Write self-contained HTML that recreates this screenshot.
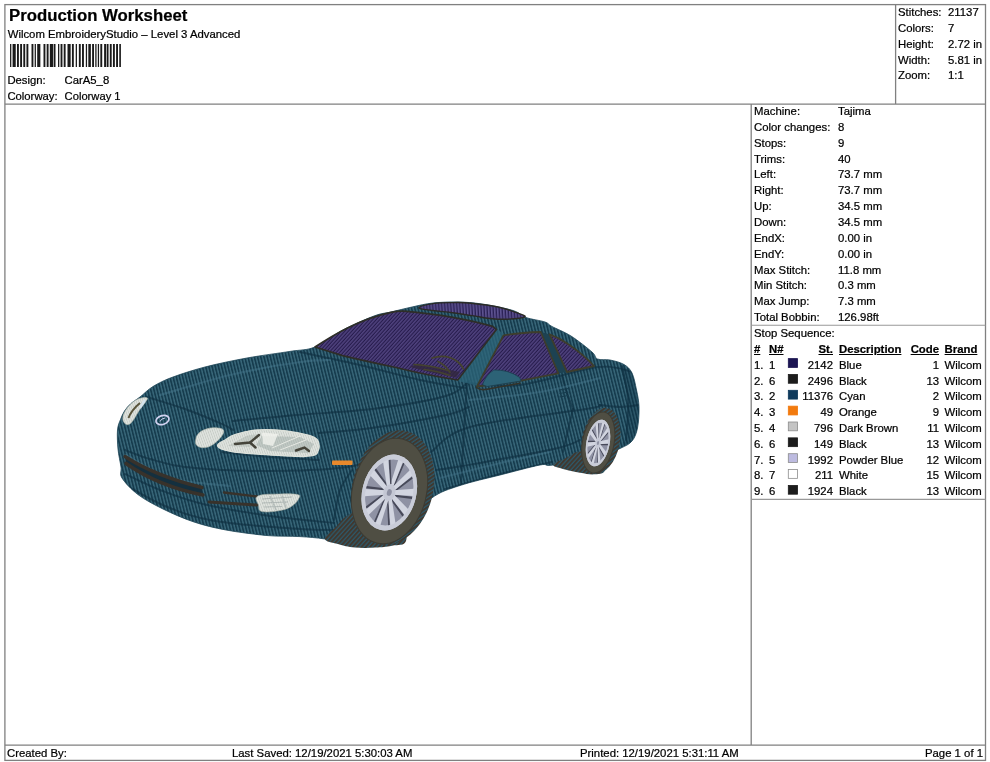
<!DOCTYPE html>
<html lang="en">
<head>
<meta charset="utf-8">
<title>Production Worksheet</title>
<style>
html,body{margin:0;padding:0;background:#fff;}
body{width:990px;height:762px;position:relative;overflow:hidden;will-change:transform;font-family:"Liberation Sans",sans-serif;color:#000;}
.t{position:absolute;white-space:pre;-webkit-text-stroke:0.22px #000;font-size:11.35px;line-height:14px;height:14px;}
.r{text-align:right;}
.b{font-weight:bold;text-decoration:underline;}
.ln{position:absolute;background:#7a7a7a;}
.sw{position:absolute;width:10px;height:9.4px;box-sizing:border-box;border:1px solid #888;}
#title{font-size:16.75px;font-weight:bold;line-height:20px;height:20px;}
</style>
</head>
<body>
<!-- frame -->
<svg style="position:absolute;left:0;top:0" width="990" height="762" viewBox="0 0 990 762" fill="none" stroke="#808080" stroke-width="1.3">
<rect x="4.9" y="4.6" width="980.6" height="755.8"/>
<path d="M4.9,104.1H985.5M4.9,745.2H985.5M895.6,4.6V104.1M751.2,104.1V745.2"/>
<path d="M751.2,325.3H985.5M751.2,499.4H985.5" stroke="#999" stroke-width="1.1"/>
</svg>
<!-- header left -->
<div class="t" id="title" style="left:9px;top:6.3px">Production Worksheet</div>
<div class="t" style="left:7.7px;top:27.2px">Wilcom EmbroideryStudio – Level 3 Advanced</div>
<svg style="position:absolute;left:10px;top:44px" width="112" height="23" viewBox="0 0 112 23" fill="#1a1a1a"><rect x="0.05" y="0" width="1.26" height="23"/><rect x="2.58" y="0" width="3.16" height="23"/><rect x="6.99" y="0" width="1.89" height="23"/><rect x="10.15" y="0" width="1.89" height="23"/><rect x="13.31" y="0" width="1.89" height="23"/><rect x="16.46" y="0" width="1.89" height="23"/><rect x="21.52" y="0" width="1.89" height="23"/><rect x="24.67" y="0" width="1.26" height="23"/><rect x="27.20" y="0" width="3.16" height="23"/><rect x="33.51" y="0" width="1.89" height="23"/><rect x="36.67" y="0" width="1.89" height="23"/><rect x="39.82" y="0" width="3.16" height="23"/><rect x="43.61" y="0" width="1.89" height="23"/><rect x="48.03" y="0" width="1.26" height="23"/><rect x="50.56" y="0" width="1.89" height="23"/><rect x="53.71" y="0" width="1.89" height="23"/><rect x="57.50" y="0" width="3.16" height="23"/><rect x="61.92" y="0" width="1.89" height="23"/><rect x="65.71" y="0" width="1.26" height="23"/><rect x="68.86" y="0" width="1.89" height="23"/><rect x="72.02" y="0" width="1.89" height="23"/><rect x="75.81" y="0" width="1.26" height="23"/><rect x="78.33" y="0" width="2.53" height="23"/><rect x="82.12" y="0" width="1.89" height="23"/><rect x="85.28" y="0" width="1.26" height="23"/><rect x="87.80" y="0" width="1.26" height="23"/><rect x="90.33" y="0" width="1.89" height="23"/><rect x="94.12" y="0" width="1.89" height="23"/><rect x="96.64" y="0" width="1.89" height="23"/><rect x="99.80" y="0" width="1.89" height="23"/><rect x="102.95" y="0" width="1.89" height="23"/><rect x="106.11" y="0" width="1.89" height="23"/><rect x="109.27" y="0" width="1.64" height="23"/></svg>
<div class="t" style="left:7.4px;top:73.2px;font-size:11.3px">Design:</div>
<div class="t" style="left:64.6px;top:73.2px;font-size:11.3px">CarA5_8</div>
<div class="t" style="left:7.4px;top:89.2px;font-size:11.3px">Colorway:</div>
<div class="t" style="left:64.6px;top:89.2px;font-size:11.2px">Colorway 1</div>
<!-- header right -->
<div class="t" style="left:898px;top:5.0px">Stitches:</div>
<div class="t" style="left:948px;top:5.0px">21137</div>
<div class="t" style="left:898px;top:20.85px">Colors:</div>
<div class="t" style="left:948px;top:20.85px">7</div>
<div class="t" style="left:898px;top:36.7px">Height:</div>
<div class="t" style="left:948px;top:36.7px">2.72 in</div>
<div class="t" style="left:898px;top:52.55px">Width:</div>
<div class="t" style="left:948px;top:52.55px">5.81 in</div>
<div class="t" style="left:898px;top:68.4px">Zoom:</div>
<div class="t" style="left:948px;top:68.4px">1:1</div>
<!-- machine info -->
<div class="t" style="left:754px;top:104.0px">Machine:</div>
<div class="t" style="left:838px;top:104.0px">Tajima</div>
<div class="t" style="left:754px;top:119.8px">Color changes:</div>
<div class="t" style="left:838px;top:119.8px">8</div>
<div class="t" style="left:754px;top:135.7px">Stops:</div>
<div class="t" style="left:838px;top:135.7px">9</div>
<div class="t" style="left:754px;top:151.6px">Trims:</div>
<div class="t" style="left:838px;top:151.6px">40</div>
<div class="t" style="left:754px;top:167.4px">Left:</div>
<div class="t" style="left:838px;top:167.4px">73.7 mm</div>
<div class="t" style="left:754px;top:183.2px">Right:</div>
<div class="t" style="left:838px;top:183.2px">73.7 mm</div>
<div class="t" style="left:754px;top:199.1px">Up:</div>
<div class="t" style="left:838px;top:199.1px">34.5 mm</div>
<div class="t" style="left:754px;top:214.9px">Down:</div>
<div class="t" style="left:838px;top:214.9px">34.5 mm</div>
<div class="t" style="left:754px;top:230.8px">EndX:</div>
<div class="t" style="left:838px;top:230.8px">0.00 in</div>
<div class="t" style="left:754px;top:246.7px">EndY:</div>
<div class="t" style="left:838px;top:246.7px">0.00 in</div>
<div class="t" style="left:754px;top:262.5px">Max Stitch:</div>
<div class="t" style="left:838px;top:262.5px">11.8 mm</div>
<div class="t" style="left:754px;top:278.4px">Min Stitch:</div>
<div class="t" style="left:838px;top:278.4px">0.3 mm</div>
<div class="t" style="left:754px;top:294.2px">Max Jump:</div>
<div class="t" style="left:838px;top:294.2px">7.3 mm</div>
<div class="t" style="left:754px;top:310.0px">Total Bobbin:</div>
<div class="t" style="left:838px;top:310.0px">126.98ft</div>
<div class="t" style="left:754px;top:326px">Stop Sequence:</div>
<div class="t b" style="left:754px;top:342px">#</div>
<div class="t b" style="left:769px;top:342px">N#</div>
<div class="t r b" style="left:753px;width:80px;top:342px">St.</div>
<div class="t b" style="left:839px;top:342px">Description</div>
<div class="t r b" style="left:859px;width:80px;top:342px">Code</div>
<div class="t b" style="left:944.6px;top:342px">Brand</div>
<div class="t" style="left:754px;top:357.7px">1.</div>
<div class="t" style="left:769px;top:357.7px">1</div>
<div class="t r" style="left:753px;width:80px;top:357.7px">2142</div>
<div class="t" style="left:839px;top:357.7px">Blue</div>
<div class="t r" style="left:859px;width:80px;top:357.7px">1</div>
<div class="t" style="left:944.6px;top:357.7px">Wilcom</div>
<div class="t" style="left:754px;top:373.5px">2.</div>
<div class="t" style="left:769px;top:373.5px">6</div>
<div class="t r" style="left:753px;width:80px;top:373.5px">2496</div>
<div class="t" style="left:839px;top:373.5px">Black</div>
<div class="t r" style="left:859px;width:80px;top:373.5px">13</div>
<div class="t" style="left:944.6px;top:373.5px">Wilcom</div>
<div class="t" style="left:754px;top:389.3px">3.</div>
<div class="t" style="left:769px;top:389.3px">2</div>
<div class="t r" style="left:753px;width:80px;top:389.3px">11376</div>
<div class="t" style="left:839px;top:389.3px">Cyan</div>
<div class="t r" style="left:859px;width:80px;top:389.3px">2</div>
<div class="t" style="left:944.6px;top:389.3px">Wilcom</div>
<div class="t" style="left:754px;top:405.1px">4.</div>
<div class="t" style="left:769px;top:405.1px">3</div>
<div class="t r" style="left:753px;width:80px;top:405.1px">49</div>
<div class="t" style="left:839px;top:405.1px">Orange</div>
<div class="t r" style="left:859px;width:80px;top:405.1px">9</div>
<div class="t" style="left:944.6px;top:405.1px">Wilcom</div>
<div class="t" style="left:754px;top:420.9px">5.</div>
<div class="t" style="left:769px;top:420.9px">4</div>
<div class="t r" style="left:753px;width:80px;top:420.9px">796</div>
<div class="t" style="left:839px;top:420.9px">Dark Brown</div>
<div class="t r" style="left:859px;width:80px;top:420.9px">11</div>
<div class="t" style="left:944.6px;top:420.9px">Wilcom</div>
<div class="t" style="left:754px;top:436.7px">6.</div>
<div class="t" style="left:769px;top:436.7px">6</div>
<div class="t r" style="left:753px;width:80px;top:436.7px">149</div>
<div class="t" style="left:839px;top:436.7px">Black</div>
<div class="t r" style="left:859px;width:80px;top:436.7px">13</div>
<div class="t" style="left:944.6px;top:436.7px">Wilcom</div>
<div class="t" style="left:754px;top:452.5px">7.</div>
<div class="t" style="left:769px;top:452.5px">5</div>
<div class="t r" style="left:753px;width:80px;top:452.5px">1992</div>
<div class="t" style="left:839px;top:452.5px">Powder Blue</div>
<div class="t r" style="left:859px;width:80px;top:452.5px">12</div>
<div class="t" style="left:944.6px;top:452.5px">Wilcom</div>
<div class="t" style="left:754px;top:468.3px">8.</div>
<div class="t" style="left:769px;top:468.3px">7</div>
<div class="t r" style="left:753px;width:80px;top:468.3px">211</div>
<div class="t" style="left:839px;top:468.3px">White</div>
<div class="t r" style="left:859px;width:80px;top:468.3px">15</div>
<div class="t" style="left:944.6px;top:468.3px">Wilcom</div>
<div class="t" style="left:754px;top:484.1px">9.</div>
<div class="t" style="left:769px;top:484.1px">6</div>
<div class="t r" style="left:753px;width:80px;top:484.1px">1924</div>
<div class="t" style="left:839px;top:484.1px">Black</div>
<div class="t r" style="left:859px;width:80px;top:484.1px">13</div>
<div class="t" style="left:944.6px;top:484.1px">Wilcom</div>
<svg style="position:absolute;left:0;top:0" width="990" height="762" viewBox="0 0 990 762"><rect x="788.3" y="358.60" width="9.3" height="8.8" fill="#1b1452" stroke="#1b1452" stroke-width="0.8"/><rect x="788.3" y="374.45" width="9.3" height="8.8" fill="#1c1c1c" stroke="#1c1c1c" stroke-width="0.8"/><rect x="788.3" y="390.30" width="9.3" height="8.8" fill="#0f3a5c" stroke="#0f3a5c" stroke-width="0.8"/><rect x="788.3" y="406.15" width="9.3" height="8.8" fill="#f27a0e" stroke="#f27a0e" stroke-width="0.8"/><rect x="788.3" y="422.00" width="9.3" height="8.8" fill="#c4c4c4" stroke="#8c8c8c" stroke-width="0.8"/><rect x="788.3" y="437.85" width="9.3" height="8.8" fill="#1c1c1c" stroke="#1c1c1c" stroke-width="0.8"/><rect x="788.3" y="453.70" width="9.3" height="8.8" fill="#bdbbe0" stroke="#8c8c8c" stroke-width="0.8"/><rect x="788.3" y="469.55" width="9.3" height="8.8" fill="#ffffff" stroke="#8c8c8c" stroke-width="0.8"/><rect x="788.3" y="485.40" width="9.3" height="8.8" fill="#1c1c1c" stroke="#1c1c1c" stroke-width="0.8"/></svg>
<!-- footer -->
<div class="t" style="left:7px;top:746px">Created By:</div>
<div class="t" style="left:232px;top:746px">Last Saved: 12/19/2021 5:30:03 AM</div>
<div class="t" style="left:580px;top:746px">Printed: 12/19/2021 5:31:11 AM</div>
<div class="t r" style="left:882px;width:101px;top:746px">Page 1 of 1</div>
<svg style="position:absolute;left:0;top:0" width="990" height="762" viewBox="0 0 990 762">
<defs>
<pattern id="pb" width="3.1" height="8" patternUnits="userSpaceOnUse" patternTransform="rotate(-14)"><rect width="3.1" height="8" fill="#163c4e"/><rect x="0.2" width="1.3" height="8" fill="#3b6b7d"/></pattern>
<pattern id="pw" width="2.6" height="8" patternUnits="userSpaceOnUse" patternTransform="rotate(42)"><rect width="2.6" height="8" fill="#261b4c"/><rect x="0.2" width="1.15" height="8" fill="#5c4f8e"/></pattern>
<pattern id="pw2" width="3" height="8" patternUnits="userSpaceOnUse" patternTransform="rotate(-4)"><rect width="3" height="8" fill="#2a2054"/><rect x="0.2" width="1.3" height="8" fill="#6a5fa0"/></pattern>
<pattern id="ps" width="3.2" height="8" patternUnits="userSpaceOnUse" patternTransform="rotate(42)"><rect width="3.2" height="8" fill="#2c596b"/><rect x="0.1" width="1.9" height="8" fill="#41362c"/></pattern>
<pattern id="pl" width="2.2" height="8" patternUnits="userSpaceOnUse" patternTransform="rotate(-20)"><rect width="2.2" height="8" fill="#c6ccc6"/><rect x="0.2" width="1.05" height="8" fill="#e9ece8"/></pattern>
<clipPath id="cb"><path d="M117.5,430.0C117.9,425.1 119.3,422.7 120.5,419.5C121.7,416.3 122.8,413.7 124.5,411.0C126.2,408.3 128.4,405.8 131.0,403.5C133.6,401.2 136.3,399.8 140.0,397.0C143.7,394.2 147.5,389.8 153.0,386.5C158.5,383.2 164.3,380.2 173.0,377.0C181.7,373.8 192.7,370.2 205.0,367.0C217.3,363.8 232.8,360.6 247.0,358.0C261.2,355.4 278.7,353.2 290.0,351.4C301.3,349.6 306.3,350.5 315.0,347.0C323.7,343.5 332.2,335.7 342.0,330.5C351.8,325.3 365.8,319.1 374.0,316.0C382.2,312.9 384.7,313.5 391.0,312.0C397.3,310.5 405.0,308.5 412.0,307.0C419.0,305.5 425.3,303.8 433.0,303.0C440.7,302.2 449.8,301.8 458.0,302.0C466.2,302.2 472.8,302.6 482.0,304.0C491.2,305.4 505.7,308.2 513.0,310.5C520.3,312.8 520.7,315.6 526.0,317.5C531.3,319.4 540.7,320.5 545.0,322.0C549.3,323.5 547.7,324.2 552.0,326.5C556.3,328.8 564.3,331.8 571.0,336.0C577.7,340.2 587.6,348.2 592.0,352.0C596.4,355.8 594.5,357.7 597.5,359.0C600.5,360.3 605.6,359.1 610.0,360.0C614.4,360.9 620.3,362.3 624.0,364.5C627.7,366.7 629.9,368.8 632.0,373.0C634.1,377.2 635.3,384.3 636.5,390.0C637.7,395.7 638.8,400.7 639.0,407.0C639.2,413.3 638.7,422.3 637.5,428.0C636.3,433.7 634.8,437.7 632.0,441.0C629.2,444.3 626.3,445.5 621.0,448.0C615.7,450.5 611.3,453.2 600.0,456.0C588.7,458.8 563.0,463.5 553.0,465.0C543.0,466.5 548.8,463.3 540.0,465.0C531.2,466.7 513.3,471.6 500.0,475.0C486.7,478.4 471.5,481.6 460.0,485.5C448.5,489.4 441.0,491.1 431.0,498.5C421.0,505.9 412.7,522.2 400.0,530.0C387.3,537.8 367.5,543.5 355.0,545.0C342.5,546.5 334.2,540.4 325.0,539.0C315.8,537.6 309.5,537.2 300.0,536.6C290.5,536.0 280.3,536.7 268.0,535.6C255.7,534.5 238.3,532.3 226.0,530.0C213.7,527.7 204.5,525.5 194.0,522.0C183.5,518.5 172.3,513.6 163.0,509.0C153.7,504.4 144.8,499.8 138.0,494.6C131.2,489.4 124.8,482.6 122.0,478.0C119.2,473.4 121.7,471.8 121.0,467.0C120.3,462.2 118.6,455.2 118.0,449.0C117.4,442.8 117.1,434.9 117.5,430.0Z"/></clipPath>
</defs>
<path d="M117.5,430.0C117.9,425.1 119.3,422.7 120.5,419.5C121.7,416.3 122.8,413.7 124.5,411.0C126.2,408.3 128.4,405.8 131.0,403.5C133.6,401.2 136.3,399.8 140.0,397.0C143.7,394.2 147.5,389.8 153.0,386.5C158.5,383.2 164.3,380.2 173.0,377.0C181.7,373.8 192.7,370.2 205.0,367.0C217.3,363.8 232.8,360.6 247.0,358.0C261.2,355.4 278.7,353.2 290.0,351.4C301.3,349.6 306.3,350.5 315.0,347.0C323.7,343.5 332.2,335.7 342.0,330.5C351.8,325.3 365.8,319.1 374.0,316.0C382.2,312.9 384.7,313.5 391.0,312.0C397.3,310.5 405.0,308.5 412.0,307.0C419.0,305.5 425.3,303.8 433.0,303.0C440.7,302.2 449.8,301.8 458.0,302.0C466.2,302.2 472.8,302.6 482.0,304.0C491.2,305.4 505.7,308.2 513.0,310.5C520.3,312.8 520.7,315.6 526.0,317.5C531.3,319.4 540.7,320.5 545.0,322.0C549.3,323.5 547.7,324.2 552.0,326.5C556.3,328.8 564.3,331.8 571.0,336.0C577.7,340.2 587.6,348.2 592.0,352.0C596.4,355.8 594.5,357.7 597.5,359.0C600.5,360.3 605.6,359.1 610.0,360.0C614.4,360.9 620.3,362.3 624.0,364.5C627.7,366.7 629.9,368.8 632.0,373.0C634.1,377.2 635.3,384.3 636.5,390.0C637.7,395.7 638.8,400.7 639.0,407.0C639.2,413.3 638.7,422.3 637.5,428.0C636.3,433.7 634.8,437.7 632.0,441.0C629.2,444.3 626.3,445.5 621.0,448.0C615.7,450.5 611.3,453.2 600.0,456.0C588.7,458.8 563.0,463.5 553.0,465.0C543.0,466.5 548.8,463.3 540.0,465.0C531.2,466.7 513.3,471.6 500.0,475.0C486.7,478.4 471.5,481.6 460.0,485.5C448.5,489.4 441.0,491.1 431.0,498.5C421.0,505.9 412.7,522.2 400.0,530.0C387.3,537.8 367.5,543.5 355.0,545.0C342.5,546.5 334.2,540.4 325.0,539.0C315.8,537.6 309.5,537.2 300.0,536.6C290.5,536.0 280.3,536.7 268.0,535.6C255.7,534.5 238.3,532.3 226.0,530.0C213.7,527.7 204.5,525.5 194.0,522.0C183.5,518.5 172.3,513.6 163.0,509.0C153.7,504.4 144.8,499.8 138.0,494.6C131.2,489.4 124.8,482.6 122.0,478.0C119.2,473.4 121.7,471.8 121.0,467.0C120.3,462.2 118.6,455.2 118.0,449.0C117.4,442.8 117.1,434.9 117.5,430.0Z" fill="url(#pb)" stroke="#1a4254" stroke-width="0.8"/>
<g clip-path="url(#cb)" fill="none" stroke="#0f2f40" stroke-opacity="0.62" stroke-width="1.9" stroke-linecap="round">
<path d="M147.0,397.0C153.3,399.0 172.5,404.5 185.0,409.0C197.5,413.5 214.0,420.5 222.0,424.0C230.0,427.5 231.2,429.0 233.0,430.0"/>
<path d="M233.0,421.0C243.7,420.0 273.8,417.0 297.0,415.0C320.2,413.0 347.2,412.2 372.0,409.0C396.8,405.8 429.8,400.7 446.0,396.0C462.2,391.3 465.2,383.5 469.0,381.0"/>
<path d="M319.0,433.0C327.8,432.2 350.8,431.0 372.0,428.0C393.2,425.0 429.8,418.5 446.0,415.0C462.2,411.5 465.2,408.3 469.0,407.0"/>
<path d="M300.0,352.0C310.0,354.2 340.0,360.3 360.0,365.0C380.0,369.7 402.3,376.2 420.0,380.0C437.7,383.8 458.3,386.7 466.0,388.0"/>
<path d="M125.0,450.0C129.2,451.5 140.0,456.2 150.0,459.0C160.0,461.8 166.7,465.0 185.0,467.0C203.3,469.0 235.8,470.7 260.0,471.0C284.2,471.3 312.0,470.3 330.0,469.0C348.0,467.7 361.7,464.0 368.0,463.0"/>
<path d="M222.0,452.0C230.0,452.8 253.8,455.7 270.0,457.0C286.2,458.3 310.8,459.5 319.0,460.0"/>
<path d="M125.0,474.0C130.8,476.7 147.0,485.0 160.0,490.0C173.0,495.0 184.7,499.7 203.0,504.0C221.3,508.3 248.2,512.8 270.0,516.0C291.8,519.2 323.3,521.8 334.0,523.0"/>
<path d="M124.0,484.0C130.8,487.7 149.8,499.8 165.0,506.0C180.2,512.2 192.5,517.2 215.0,521.0C237.5,524.8 279.2,527.5 300.0,529.0C320.8,530.5 333.3,529.8 340.0,530.0"/>
<path d="M352.0,470.0C350.0,473.3 343.0,481.7 340.0,490.0C337.0,498.3 335.0,515.0 334.0,520.0"/>
<path d="M431.0,452.0C437.5,447.8 444.2,434.2 470.0,427.0C495.8,419.8 564.3,412.7 586.0,409.0C607.7,405.3 597.7,405.7 600.0,405.0"/>
<path d="M436.0,470.0C440.3,469.3 442.3,469.5 462.0,466.0C481.7,462.5 534.3,453.3 554.0,449.0C573.7,444.7 575.7,441.5 580.0,440.0"/>
<path d="M445.0,489.0C454.2,486.5 482.2,478.5 500.0,474.0C517.8,469.5 543.3,464.0 552.0,462.0"/>
<path d="M467.0,383.0C475.8,383.3 498.2,387.7 520.0,385.0C541.8,382.3 579.3,369.2 598.0,367.0C616.7,364.8 626.3,371.2 632.0,372.0"/>
<path d="M467.0,383.0C466.5,390.8 465.0,413.2 464.0,430.0C463.0,446.8 461.5,475.0 461.0,484.0"/>
<path d="M573.0,409.0C572.2,412.5 569.7,422.8 568.0,430.0C566.3,437.2 563.8,448.3 563.0,452.0"/>
<path d="M562.0,376.0C562.7,378.3 564.2,384.5 566.0,390.0C567.8,395.5 571.8,405.8 573.0,409.0"/>
<path d="M622.0,366.0C623.0,371.7 627.3,387.7 628.0,400.0C628.7,412.3 626.3,433.3 626.0,440.0"/>
<path d="M600.0,405.0C603.3,405.3 613.7,407.0 620.0,407.0C626.3,407.0 635.0,405.3 638.0,405.0"/>
</g>
<g clip-path="url(#cb)" fill="none" stroke="#4d8298" stroke-opacity="0.35" stroke-width="2.2" stroke-linecap="round">
<path d="M160.0,395.0C171.7,391.7 206.7,380.5 230.0,375.0C253.3,369.5 283.3,364.5 300.0,362.0C316.7,359.5 325.0,360.3 330.0,360.0"/>
<path d="M470.0,400.0C481.7,398.7 518.3,395.7 540.0,392.0C561.7,388.3 590.0,380.3 600.0,378.0"/>
<path d="M126.0,455.0C133.3,458.8 152.7,472.8 170.0,478.0C187.3,483.2 220.0,484.7 230.0,486.0"/>
<path d="M440.0,478.0C450.0,475.5 481.7,467.3 500.0,463.0C518.3,458.7 541.7,453.8 550.0,452.0"/>
</g>
<path d="M622,366 L632,373 L636.5,390 L639,407 L637.5,428 L632,441 L621,448 L626,438 L628.5,400Z" fill="#0f2f40" fill-opacity="0.28" clip-path="url(#cb)"/>
<path d="M559.5,390 l9,-1.5 M559.5,393.5 l9,-1.5 M559.5,397 l9,-1.5" stroke="#173c4e" stroke-width="1.2" fill="none"/>
<path d="M495,328 L504,334 L478,386 L458,381Z" fill="#2c6478" fill-opacity="0.75"/>
<path d="M541,332 L550,334.5 L567.5,372 L558,373.5Z" fill="#1d4252"/>
<path d="M315,347 C332,336 358,319.5 391,312.4 Q398,310.8 404,311.2 Q430,313.5 452.7,317.3 Q476,321.5 492.7,326.4 L496.4,329.5 L457.8,380 Q428,375.5 396,367.5 Q365,361 342.5,355.6 Z" fill="url(#pw)" stroke="#2e2e28" stroke-width="1.7" stroke-linejoin="round"/>
<path d="M419.0,307.6C419.5,306.2 427.7,304.4 434.5,303.4C441.3,302.4 445.7,302.6 453.0,302.6C460.3,302.6 462.0,302.3 471.0,303.2C480.0,304.1 488.6,305.0 498.0,307.0C507.4,309.0 512.7,311.2 518.0,313.2C523.3,315.2 526.7,316.0 524.5,317.2C522.3,318.4 513.4,318.9 507.0,319.2C500.6,319.5 499.7,319.5 492.7,318.8C485.7,318.1 480.0,316.8 472.0,315.6C464.0,314.4 460.7,313.7 452.7,312.7C444.7,311.7 438.7,311.5 432.0,310.5C425.3,309.5 418.5,309.0 419.0,307.6Z" fill="url(#pw2)" stroke="#2b2b26" stroke-width="1.4"/>
<path d="M503.5,335.4 Q520,332.5 540.7,332 L558.4,373.3 L521,380.6 L477,386.5 Z" fill="url(#pw)" stroke="#3d3d2c" stroke-width="1.8" stroke-linejoin="round"/>
<path d="M549.5,334.3 Q560,338 568,344 Q584,355 594,366 L567,372 Z" fill="url(#pw)" stroke="#3d3d2c" stroke-width="1.8" stroke-linejoin="round"/>
<path d="M410,367 Q432,373 456,377.5 L460,372 Q440,368 418,363.5Z" fill="#33283f" fill-opacity="0.85"/>
<g fill="none" stroke="#45432f" stroke-width="1.7" stroke-linecap="round"><path d="M432,358 Q447,353.5 458,362 Q462,365.5 463.5,369"/><path d="M414,364.5 q18,1 34,6"/><path d="M438,361.5 q8,4 12,11"/><path d="M424,369.5 q14,1.5 26,6"/></g>
<path d="M482.5,384.6 Q486,375 493.8,370 Q508,369.5 519.6,377.4 L521,381 L487,386.5 Z" fill="#2c6276" stroke="#1c4050" stroke-width="0.8"/>
<path d="M476.5,387.5 Q480,390.5 487,389.2 L520,383.2" fill="none" stroke="#33332a" stroke-width="1.6" stroke-linecap="round"/>
<path d="M125,456.5 Q155,476 202,487.5 L203,495 Q158,486 126,463.5Z" fill="#14303f"/>
<g fill="none" stroke="#38322b" stroke-linecap="round">
<path d="M125,456.5 Q155,476 202,487.5" stroke-width="3.4"/>
<path d="M126,463.5 Q158,486 203,495" stroke-width="3.6"/>
<path d="M224,492.5 L257,496.5" stroke-width="2.4"/>
<path d="M209,502 L257,505" stroke-width="3"/>
</g>
<path d="M258.0,496.0C262.3,493.8 272.2,494.3 280.0,494.0C287.8,493.7 293.2,493.7 297.0,494.5C300.8,495.3 300.0,495.7 299.0,498.0C298.0,500.3 295.8,503.5 292.0,506.0C288.2,508.5 286.0,509.4 280.0,510.5C274.0,511.6 266.3,512.6 262.0,511.5C257.7,510.4 259.3,508.1 258.5,505.0C257.7,501.9 253.7,498.2 258.0,496.0Z" fill="url(#pl)" stroke="#aab0a6" stroke-width="0.6"/>
<path d="M262,499 L292,497 M262,503 L288,502 M264,507 L282,506.5 M270,496 L276,510 M282,495.5 L286,508" stroke="#8f9a9a" stroke-opacity="0.55" stroke-width="1.2" fill="none"/>
<rect x="332" y="460.5" width="20.5" height="4.6" rx="1" fill="#e8892c"/>
<path d="M217.6,446.0C216.7,443.6 222.5,441.8 226.0,439.5C229.5,437.2 229.6,436.5 235.0,434.7C240.4,432.9 244.8,431.2 253.0,430.3C261.2,429.4 266.9,429.5 276.0,430.0C285.1,430.5 290.8,431.5 298.6,433.0C306.4,434.5 310.9,435.3 315.0,437.7C319.1,440.1 318.4,442.3 319.0,445.0C319.6,447.7 318.8,449.0 318.0,451.0C317.2,453.0 317.8,453.9 315.0,455.0C312.2,456.1 308.8,456.3 304.0,456.5C299.2,456.7 299.6,456.4 291.0,456.0C282.4,455.6 272.9,455.3 260.8,454.4C248.7,453.5 239.1,453.1 230.5,451.4C221.9,449.7 218.5,448.4 217.6,446.0Z" fill="url(#pl)" stroke="#dde1da" stroke-width="1.3"/>
<path d="M262,436 L300,437 L314,444 L308,453 L270,451 L256,445Z" fill="#9aa6a2" fill-opacity="0.45"/><path d="M228,446 L246,436 L258,434 L250,447Z" fill="#a4aea8" fill-opacity="0.4"/><g fill="none" stroke="#45443a" stroke-width="2.4" stroke-linecap="round"><path d="M235,444 l15,-1.5 l9,-7.5"/><path d="M250,442.5 l5.5,5"/><path d="M296,450.5 l8.5,-3 l4.5,3.5"/></g>
<path d="M262,432.5 l16,1.5 l-5,12 l-10,-2z" fill="#f1f3ee" fill-opacity="0.8"/><path d="M272,448 L300,436 M280,450 L306,440" stroke="#e6e9e3" stroke-width="1" fill="none"/>
<path d="M195.6,441.0C195.8,438.5 196.1,436.0 198.5,433.5C200.9,431.0 203.8,429.7 207.7,428.6C211.6,427.5 214.8,427.6 218.0,428.0C221.2,428.4 223.0,428.7 223.6,430.5C224.2,432.3 223.1,434.2 221.0,437.0C218.9,439.8 216.3,442.4 213.0,444.5C209.7,446.6 207.8,447.3 204.7,447.6C201.6,447.9 199.3,447.3 197.5,446.0C195.7,444.7 195.4,443.5 195.6,441.0Z" fill="url(#pl)" stroke="#b4baae" stroke-width="0.6"/>
<path d="M122.8,418.0C122.9,415.7 123.6,414.1 125.0,411.5C126.4,408.9 127.5,407.4 130.0,405.0C132.5,402.6 134.1,400.8 137.5,399.3C140.9,397.8 145.2,397.2 146.8,397.7C148.4,398.2 147.0,399.5 145.5,402.0C144.0,404.5 142.0,406.3 139.5,410.0C137.0,413.7 135.2,417.6 133.0,420.5C130.8,423.4 130.2,424.0 128.5,424.5C126.8,425.0 125.6,424.3 124.5,423.0C123.4,421.7 122.7,420.3 122.8,418.0Z" fill="url(#pl)" stroke="#b4baae" stroke-width="0.6"/>
<path d="M128.5,418 q3,-8 11.5,-15" fill="none" stroke="#5a553c" stroke-width="2"/><path d="M140,408 l5,-8" stroke="#d4e4ee" stroke-width="2.2" fill="none"/>
<ellipse cx="162.5" cy="420" rx="6.7" ry="4.4" transform="rotate(-18 162.5 420.2)" fill="none" stroke="#d2d2f0" stroke-width="1.7"/>
<path d="M160,421.5 q1,-3 5,-3.5" fill="none" stroke="#cfcfee" stroke-width="1"/>
<path d="M347.0,516.0C340.2,520.4 340.4,522.5 336.0,527.0C331.6,531.5 324.6,535.3 325.0,538.7C325.4,542.1 332.0,542.2 338.0,544.0C344.0,545.8 347.6,546.8 355.0,547.5C362.4,548.2 367.6,547.9 375.0,547.5C382.4,547.1 385.8,547.0 392.0,545.7C398.2,544.4 404.4,546.1 406.0,541.0C407.6,535.9 407.2,527.2 400.0,520.0C392.8,512.8 380.6,505.8 370.0,505.0C359.4,504.2 353.8,511.6 347.0,516.0Z" fill="url(#ps)"/>
<ellipse cx="392.8" cy="487.5" rx="40.5" ry="58" transform="rotate(14 392.8 487.5)" fill="url(#ps)"/>
<ellipse cx="389.5" cy="491" rx="37" ry="53.5" transform="rotate(14 389.5 491)" fill="#4f4e43" stroke="#3c3b33" stroke-width="1"/>
<g transform="translate(389.3 492.5) rotate(14) scale(0.2700 0.3850)">
<circle r="100" fill="#c9ccd8"/>
<circle r="87" fill="#8f92a4"/>
<g transform="rotate(8)"><path d="M8,-20 L14,-86" stroke="#474959" stroke-width="6" fill="none"/><path d="M-6,-14 L-9.5,-89 L9.5,-89 L6,-14Z" fill="#d2d5e0"/></g>
<g transform="rotate(44)"><path d="M8,-20 L14,-86" stroke="#474959" stroke-width="6" fill="none"/><path d="M-6,-14 L-9.5,-89 L9.5,-89 L6,-14Z" fill="#d2d5e0"/></g>
<g transform="rotate(80)"><path d="M8,-20 L14,-86" stroke="#474959" stroke-width="6" fill="none"/><path d="M-6,-14 L-9.5,-89 L9.5,-89 L6,-14Z" fill="#d2d5e0"/></g>
<g transform="rotate(116)"><path d="M8,-20 L14,-86" stroke="#474959" stroke-width="6" fill="none"/><path d="M-6,-14 L-9.5,-89 L9.5,-89 L6,-14Z" fill="#d2d5e0"/></g>
<g transform="rotate(152)"><path d="M8,-20 L14,-86" stroke="#474959" stroke-width="6" fill="none"/><path d="M-6,-14 L-9.5,-89 L9.5,-89 L6,-14Z" fill="#d2d5e0"/></g>
<g transform="rotate(188)"><path d="M8,-20 L14,-86" stroke="#474959" stroke-width="6" fill="none"/><path d="M-6,-14 L-9.5,-89 L9.5,-89 L6,-14Z" fill="#d2d5e0"/></g>
<g transform="rotate(224)"><path d="M8,-20 L14,-86" stroke="#474959" stroke-width="6" fill="none"/><path d="M-6,-14 L-9.5,-89 L9.5,-89 L6,-14Z" fill="#d2d5e0"/></g>
<g transform="rotate(260)"><path d="M8,-20 L14,-86" stroke="#474959" stroke-width="6" fill="none"/><path d="M-6,-14 L-9.5,-89 L9.5,-89 L6,-14Z" fill="#d2d5e0"/></g>
<g transform="rotate(296)"><path d="M8,-20 L14,-86" stroke="#474959" stroke-width="6" fill="none"/><path d="M-6,-14 L-9.5,-89 L9.5,-89 L6,-14Z" fill="#d2d5e0"/></g>
<g transform="rotate(332)"><path d="M8,-20 L14,-86" stroke="#474959" stroke-width="6" fill="none"/><path d="M-6,-14 L-9.5,-89 L9.5,-89 L6,-14Z" fill="#d2d5e0"/></g>
<circle r="22" fill="#c4c7d4"/><circle r="9" fill="#8e91a3"/>
<circle r="94" fill="none" stroke="#c9ccd8" stroke-width="12"/>
</g>
<path d="M580.0,451.5C573.2,452.1 571.4,455.3 566.0,458.0C560.6,460.7 553.2,462.5 553.0,464.8C552.8,467.1 559.6,467.9 565.0,469.5C570.4,471.1 574.0,471.7 580.0,472.7C586.0,473.7 590.0,474.8 595.0,474.3C600.0,473.8 604.0,473.9 605.0,470.0C606.0,466.1 605.0,458.7 600.0,455.0C595.0,451.3 586.8,450.9 580.0,451.5Z" fill="url(#ps)"/>
<ellipse cx="600.8" cy="440.8" rx="19" ry="33.5" transform="rotate(11 600.8 440.8)" fill="url(#ps)"/>
<ellipse cx="598.3" cy="442.5" rx="15.8" ry="31" transform="rotate(11 598.3 442.5)" fill="#4f4e43" stroke="#3c3b33" stroke-width="1"/>
<g transform="translate(598 443) rotate(11) scale(0.1160 0.2360)">
<circle r="100" fill="#c9ccd8"/>
<circle r="87" fill="#8f92a4"/>
<g transform="rotate(8)"><path d="M8,-20 L14,-86" stroke="#474959" stroke-width="6" fill="none"/><path d="M-6,-14 L-9.5,-89 L9.5,-89 L6,-14Z" fill="#d2d5e0"/></g>
<g transform="rotate(44)"><path d="M8,-20 L14,-86" stroke="#474959" stroke-width="6" fill="none"/><path d="M-6,-14 L-9.5,-89 L9.5,-89 L6,-14Z" fill="#d2d5e0"/></g>
<g transform="rotate(80)"><path d="M8,-20 L14,-86" stroke="#474959" stroke-width="6" fill="none"/><path d="M-6,-14 L-9.5,-89 L9.5,-89 L6,-14Z" fill="#d2d5e0"/></g>
<g transform="rotate(116)"><path d="M8,-20 L14,-86" stroke="#474959" stroke-width="6" fill="none"/><path d="M-6,-14 L-9.5,-89 L9.5,-89 L6,-14Z" fill="#d2d5e0"/></g>
<g transform="rotate(152)"><path d="M8,-20 L14,-86" stroke="#474959" stroke-width="6" fill="none"/><path d="M-6,-14 L-9.5,-89 L9.5,-89 L6,-14Z" fill="#d2d5e0"/></g>
<g transform="rotate(188)"><path d="M8,-20 L14,-86" stroke="#474959" stroke-width="6" fill="none"/><path d="M-6,-14 L-9.5,-89 L9.5,-89 L6,-14Z" fill="#d2d5e0"/></g>
<g transform="rotate(224)"><path d="M8,-20 L14,-86" stroke="#474959" stroke-width="6" fill="none"/><path d="M-6,-14 L-9.5,-89 L9.5,-89 L6,-14Z" fill="#d2d5e0"/></g>
<g transform="rotate(260)"><path d="M8,-20 L14,-86" stroke="#474959" stroke-width="6" fill="none"/><path d="M-6,-14 L-9.5,-89 L9.5,-89 L6,-14Z" fill="#d2d5e0"/></g>
<g transform="rotate(296)"><path d="M8,-20 L14,-86" stroke="#474959" stroke-width="6" fill="none"/><path d="M-6,-14 L-9.5,-89 L9.5,-89 L6,-14Z" fill="#d2d5e0"/></g>
<g transform="rotate(332)"><path d="M8,-20 L14,-86" stroke="#474959" stroke-width="6" fill="none"/><path d="M-6,-14 L-9.5,-89 L9.5,-89 L6,-14Z" fill="#d2d5e0"/></g>
<circle r="22" fill="#c4c7d4"/><circle r="9" fill="#8e91a3"/>
<circle r="94" fill="none" stroke="#c9ccd8" stroke-width="12"/>
</g>
</svg>
</body>
</html>
